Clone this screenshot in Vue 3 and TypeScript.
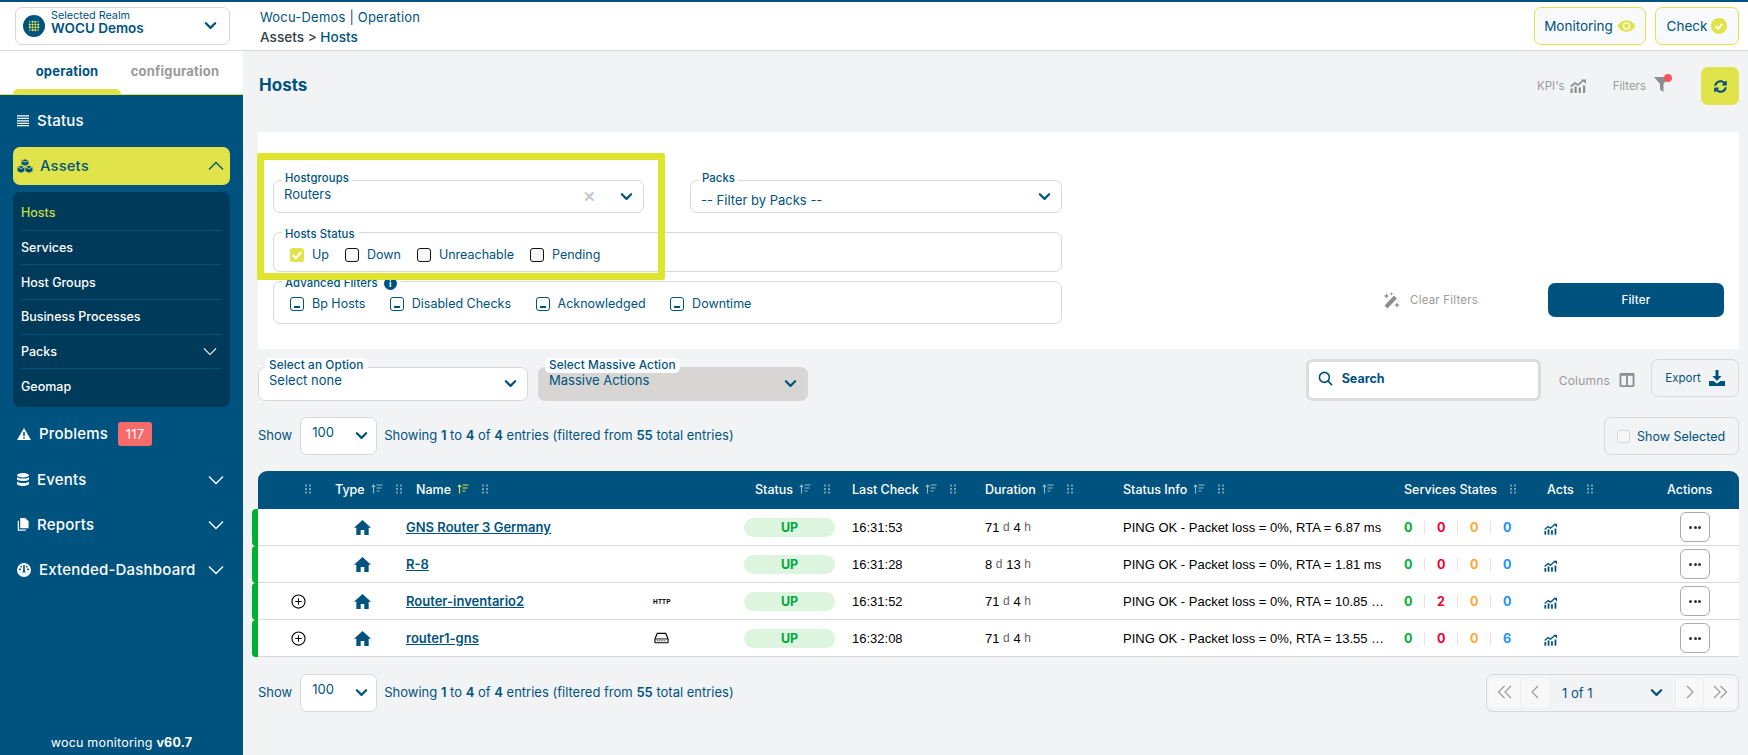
<template>
  <div class="page">
    <svg class="defs" width="0" height="0">
      <symbol id="i-chev" viewBox="0 0 14 10"><path d="M2 2l5 5 5-5" fill="none" stroke="currentColor" stroke-width="2.4" stroke-linecap="round" stroke-linejoin="round" /></symbol>
      <symbol id="i-thin" viewBox="0 0 16 10"><path d="M1 1.500l7 7 7-7" fill="none" stroke="currentColor" stroke-width="1.300" /></symbol>
      <symbol id="i-sort" viewBox="0 0 12 10"><path d="M2.500 9.500V1M.8 2.800L2.500 1l1.700 1.800M5.500 1h6M5.500 4h5M5.500 7h3" fill="none" stroke="currentColor" stroke-width="1.100" /></symbol>
      <symbol id="i-grip" viewBox="0 0 8 10"><g fill="currentColor"><rect x="1" y="0.500" width="2" height="2" /><rect x="5" y="0.500" width="2" height="2" /><rect x="1" y="4" width="2" height="2" /><rect x="5" y="4" width="2" height="2" /><rect x="1" y="7.500" width="2" height="2" /><rect x="5" y="7.500" width="2" height="2" /></g></symbol>
      <symbol id="i-home" viewBox="0 0 16 14"><path fill="currentColor" d="M8 0L0 7.200h2.200V14h4.100V9.300h3.400V14h4.100V7.200H16z" /></symbol>
      <symbol id="i-chart" viewBox="0 0 16 14"><path d="M.8 7.500l4.200-3.500 3 2 5.500-4.800" fill="none" stroke="currentColor" stroke-width="1.700" /><path d="M11.500.5H16V5z" fill="currentColor" /><g fill="currentColor"><rect x="0.500" y="9.500" width="2.200" height="4.500" /><rect x="4.500" y="7.500" width="2.200" height="6.500" /><rect x="8.700" y="8.500" width="2.200" height="5.500" /><rect x="13" y="6.500" width="2.200" height="7.500" /></g></symbol>
      <symbol id="i-dbl" viewBox="0 0 16 14"><path d="M7.500 1L1.500 7l6 6M14 1L8 7l6 6" fill="none" stroke="currentColor" stroke-width="1.200" /></symbol>
      <symbol id="i-one" viewBox="0 0 10 14"><path d="M8 1L2 7l6 6" fill="none" stroke="currentColor" stroke-width="1.200" /></symbol>
      <symbol id="i-sync" viewBox="0 0 512 512"><path fill="currentColor" d="M370.72 133.28C339.458 104.008 298.888 87.962 255.848 88c-77.458.068-144.328 53.178-162.791 126.85-1.344 5.363-6.122 9.15-11.651 9.15H24.103c-7.498 0-13.194-6.807-11.807-14.176C33.933 94.924 134.813 8 256 8c66.448 0 126.791 26.136 171.315 68.685L463.03 40.97C478.149 25.851 504 36.559 504 57.941V192c0 13.255-10.745 24-24 24H345.941c-21.382 0-32.09-25.851-16.971-40.971l41.75-41.749zM32 296h134.059c21.382 0 32.09 25.851 16.971 40.971l-41.75 41.75c31.262 29.273 71.835 45.319 114.876 45.28 77.418-.07 144.315-53.144 162.787-126.849 1.344-5.363 6.122-9.15 11.651-9.15h57.304c7.498 0 13.194 6.807 11.807 14.176C478.067 417.076 377.187 504 256 504c-66.448 0-126.791-26.136-171.315-68.685L48.97 471.03C33.851 486.149 8 475.441 8 454.059V320c0-13.255 10.745-24 24-24z" /></symbol>
    </svg>

    <header class="topbar">
      <div class="realm">
        <svg class="realm-logo" viewBox="0 0 22 22">
          <circle cx="11" cy="11" r="11" fill="#00537f" />
          <g fill="#e0e44a">
            <circle v-for="d in logoDots" :key="d.x + '-' + d.y" :cx="d.x" :cy="d.y" :r="d.r" />
          </g>
        </svg>
        <div class="realm-text">
          <span class="realm-small">Selected Realm</span>
          <span class="realm-name">WOCU Demos</span>
        </div>
        <svg class="chev realm-chev"><use href="#i-chev" /></svg>
      </div>
      <div class="crumbs">
        <div class="crumb-top">Wocu-Demos | Operation</div>
        <div class="crumb-path"><b>Assets &gt;</b> Hosts</div>
      </div>
      <div class="top-actions">
        <button class="top-btn monitoring">
          Monitoring
          <svg class="eye" viewBox="0 0 20 14">
            <path d="M10 1C5.500 1 2 4 .5 7c1.500 3 5 6 9.500 6s8-3 9.500-6C18 4 14.500 1 10 1z" fill="#e0e44a" />
            <circle cx="10" cy="7" r="4" fill="#f8f9fa" />
            <circle cx="10" cy="7" r="2.600" fill="#e0e44a" />
          </svg>
        </button>
        <button class="top-btn check">
          Check
          <svg class="eye-check" viewBox="0 0 16 16">
            <circle cx="8" cy="8" r="8" fill="#e0e44a" />
            <path d="M4.500 8.200l2.400 2.400 4.600-4.800" fill="none" stroke="#fff" stroke-width="1.800" />
          </svg>
        </button>
      </div>
    </header>

    <div class="body">
      <aside class="sidebar">
        <div class="tabs">
          <div class="tab active">operation</div>
          <div class="tab">configuration</div>
        </div>
        <nav class="nav">
          <div class="nav-item">
            <svg class="nav-icon" viewBox="0 0 13 12"><path d="M0 1h13M0 3.700h13M0 6.400h13M0 9.100h13M0 11.500h13" stroke="currentColor" stroke-width="1.500" /></svg>
            <span class="status-label">Status</span>
          </div>
          <div class="nav-current">
            <svg class="nav-icon cubes" viewBox="0 0 16 14">
              <g fill="currentColor" stroke="#e0e44a" stroke-width="0.500"><path d="M8 0l3.800 1.500v4L8 7 4.200 5.500v-4z" /><path d="M4 6.500l3.800 1.500v4.300L4 14 .2 12.300V8z" /><path d="M12 6.500L15.800 8v4.300L12 14l-3.800-1.700V8z" /></g>
              <path d="M4.500 1.700L8 3l3.500-1.300M.6 8.200L4 9.600l3.400-1.400M8.600 8.200L12 9.600l3.400-1.400" fill="none" stroke="#e0e44a" stroke-width="0.800" />
            </svg>
            <span>Assets</span>
            <svg class="thin up"><use href="#i-thin" /></svg>
          </div>
          <div class="submenu">
            <div v-for="s in subItems" :key="s.label" class="sub-item" :class="{ on: s.on }">
              {{ s.label }}
              <svg v-if="s.more" class="thin small"><use href="#i-thin" /></svg>
            </div>
          </div>
          <div class="nav-item problems">
            <svg class="nav-icon wide" viewBox="0 0 14 12"><path fill-rule="evenodd" fill="currentColor" d="M7 0l7 12H0zM6.200 4v4h1.600V4zm0 5v1.500h1.600V9z" /></svg>
            <span>Problems</span>
            <span class="badge">117</span>
          </div>
          <div class="nav-item">
            <svg class="nav-icon" viewBox="0 0 12 13"><g fill="currentColor"><ellipse cx="6" cy="2.200" rx="6" ry="2.200" /><path d="M0 4v2c0 1.200 2.700 2 6 2s6-.8 6-2V4c-1 1-3.500 1.500-6 1.500S1 5 0 4z" /><path d="M0 8.500v2.300C0 12 2.700 13 6 13s6-1 6-2.200V8.500c-1 1-3.500 1.500-6 1.500S1 9.500 0 8.500z" /></g></svg>
            <span>Events</span>
            <svg class="thin"><use href="#i-thin" /></svg>
          </div>
          <div class="nav-item">
            <svg class="nav-icon" viewBox="0 0 12 14"><path fill="currentColor" d="M3 0h5.500L12 3.500V11H3z" /><path d="M1 3v10h8" fill="none" stroke="currentColor" stroke-width="1.300" /></svg>
            <span>Reports</span>
            <svg class="thin"><use href="#i-thin" /></svg>
          </div>
          <div class="nav-item extended">
            <svg class="nav-icon wide" viewBox="0 0 14 14"><path fill-rule="evenodd" fill="currentColor" d="M7 0a7 7 0 1 1 0 14A7 7 0 0 1 7 0zM6.200 2v5.500l-1 2h3.600l-1-2V2zM2 5.500v1.800h1.800V5.500zM10.200 5.500v1.800H12V5.500zM3.500 2.800v1.800h1.400V2.800zM9.100 2.800v1.800h1.400V2.800z" /></svg>
            <span>Extended-Dashboard</span>
            <svg class="thin"><use href="#i-thin" /></svg>
          </div>
          <div class="version">wocu monitoring <b>v60.7</b></div>
        </nav>
      </aside>

      <main class="main">
        <div class="title-row">
          <h1 class="title">Hosts</h1>
          <div class="title-tools">
            <span class="tool">KPI's <svg class="tool-icon"><use href="#i-chart" /></svg></span>
            <span class="tool filters">
              Filters
              <svg class="funnel" viewBox="0 0 18 18"><path d="M0 3h15L9.500 10v8L6 15.500V10z" fill="#8e8e8e" /><circle cx="14" cy="4" r="4" fill="#f4555e" /></svg>
            </span>
            <button class="refresh"><svg class="sync"><use href="#i-sync" /></svg></button>
          </div>
        </div>

        <section class="panel">
          <div class="highlight"></div>
          <div class="filter-grid">
            <div class="field box-select">
              <label class="legend">Hostgroups</label>
              <span class="value up-value">Routers</span>
              <span class="clear">✕</span>
              <svg class="chev"><use href="#i-chev" /></svg>
            </div>
            <div class="field box-select">
              <label class="legend">Packs</label>
              <span class="value low-value">-- Filter by Packs --</span>
              <svg class="chev"><use href="#i-chev" /></svg>
            </div>
            <div class="field box-checks status-box">
              <label class="legend low-legend">Hosts Status</label>
              <div class="checks">
                <span v-for="c in statusChecks" :key="c.label" class="check-item">
                  <span class="cb" :class="{ on: c.on }">
                    <svg v-if="c.on" viewBox="0 0 10 10"><path d="M2 5l2.200 2.200L8 3" fill="none" stroke="#fff" stroke-width="1.500" /></svg>
                  </span>
                  {{ c.label }}
                </span>
              </div>
            </div>
            <div class="field box-checks advanced-box">
              <label class="legend low-legend">Advanced Filters <i class="info">i</i></label>
              <div class="checks wide-gap">
                <span v-for="c in advancedChecks" :key="c" class="check-item">
                  <span class="cb minus"></span>
                  {{ c }}
                </span>
              </div>
            </div>
          </div>
          <div class="filter-actions">
            <span class="clear-filters">
              <svg class="wand" viewBox="0 0 17 17">
                <path d="M3 15L12.500 5" stroke="#8e8e8e" stroke-width="4" />
                <path d="M3.500 1l.8 2.200 2.200.8-2.200.8-.8 2.200-.8-2.200L.5 4l2.200-.8zM14 10l.8 2.200 2.200.8-2.200.8-.8 2.200-.8-2.200-2.200-.8 2.200-.8zM8.500 0l.5 1.300 1.300.5-1.300.5-.5 1.300L8 2.300l-1.300-.5L8 1.300z" fill="#8e8e8e" />
              </svg>
              Clear Filters
            </span>
            <button class="filter-btn">Filter</button>
          </div>
        </section>

        <div class="toolbar">
          <div class="field tool-select">
            <label class="legend pill-legend">Select an Option</label>
            <span class="value raised">Select none</span>
            <svg class="chev"><use href="#i-chev" /></svg>
          </div>
          <div class="field tool-select disabled">
            <label class="legend pill-legend">Select Massive Action</label>
            <span class="value raised">Massive Actions</span>
            <svg class="chev"><use href="#i-chev" /></svg>
          </div>
          <div class="toolbar-right">
            <div class="search">
              <svg class="search-icon" viewBox="0 0 16 16"><circle cx="6.800" cy="6.800" r="5.300" fill="none" stroke="currentColor" stroke-width="1.700" /><path d="M10.800 10.800L15 15" stroke="currentColor" stroke-width="1.700" /></svg>
              Search
            </div>
            <span class="columns">
              Columns
              <svg class="col-icon" viewBox="0 0 16 15"><path fill-rule="evenodd" fill="#8e8e8e" d="M1.500 0h13A1.500 1.500 0 0 1 16 1.500v12a1.500 1.500 0 0 1-1.500 1.500h-13A1.500 1.500 0 0 1 0 13.500v-12A1.500 1.500 0 0 1 1.500 0zM2 3v10h5V3zm7 0v10h5V3z" /></svg>
            </span>
            <button class="export">
              Export
              <svg class="export-icon" viewBox="0 0 16 16"><path d="M6.500 0h3v6h3L8 11 3.500 6h3z" fill="currentColor" /><path d="M0 11h4.500L8 13.500 11.500 11H16v5H0z" fill="currentColor" /></svg>
            </button>
          </div>
        </div>

        <div class="show-row">
          <span class="show-label">Show</span>
          <div class="per-page"><span>100</span><svg class="chev"><use href="#i-chev" /></svg></div>
          <span class="entries">Showing <b>1</b> to <b>4</b> of <b>4</b> entries (filtered from <b>55</b> total entries)</span>
          <div class="show-selected"><span class="cb-light"></span>Show Selected</div>
        </div>

        <div class="table">
          <div class="row head">
            <div class="th drag-only"><svg class="grip"><use href="#i-grip" /></svg></div>
            <div v-for="h in headers" :key="h.label" class="th" :class="h.cls">
              {{ h.label }}
              <svg v-if="h.sort" class="sort" :class="{ active: h.active }"><use href="#i-sort" /></svg>
              <svg v-if="h.grip" class="grip"><use href="#i-grip" /></svg>
            </div>
          </div>
          <div v-for="r in rows" :key="r.name" class="row host">
            <div class="td expand">
              <svg v-if="r.expand" class="plus" viewBox="0 0 16 16"><circle cx="8" cy="8" r="7" fill="#fff" stroke="#000" stroke-width="1.200" /><path d="M8 4.500v7M4.500 8h7" stroke="#000" stroke-width="1" /></svg>
            </div>
            <div class="td type"><svg class="home"><use href="#i-home" /></svg></div>
            <div class="td name"><a>{{ r.name }}</a></div>
            <div class="td pack">
              <span v-if="r.pack === 'http'" class="http">HTTP</span>
              <svg v-else-if="r.pack === 'disk'" class="disk" viewBox="0 0 16 12"><path d="M3.500 1h9L15 7v3.500a.6.600 0 0 1-.6.500H1.600a.6.600 0 0 1-.6-.5V7z" fill="none" stroke="#000" stroke-width="1.200" /><path d="M1.500 7h13" stroke="#000" stroke-width="1" /><path d="M3 9h10" stroke="#000" stroke-dasharray="1 1" /></svg>
            </div>
            <div class="td"><span class="pill">UP</span></div>
            <div class="td plain">{{ r.time }}</div>
            <div class="td plain">{{ r.days }} <small>d</small> {{ r.hours }} <small>h</small></div>
            <div class="td plain info-cell"><span>{{ r.info }}</span></div>
            <div class="td states">
              <b class="s-ok">0</b><i></i><b class="s-crit">{{ r.crit }}</b><i></i><b class="s-warn">0</b><i></i><b class="s-unk">{{ r.unk }}</b>
            </div>
            <div class="td acts"><svg class="act-chart"><use href="#i-chart" /></svg></div>
            <div class="td more"><button class="more-btn"><span></span><span></span><span></span></button></div>
          </div>
        </div>

        <div class="bottom-row">
          <span class="show-label">Show</span>
          <div class="per-page"><span>100</span><svg class="chev"><use href="#i-chev" /></svg></div>
          <span class="entries">Showing <b>1</b> to <b>4</b> of <b>4</b> entries (filtered from <b>55</b> total entries)</span>
          <div class="pager">
            <span class="pg first"><svg class="pg-dbl"><use href="#i-dbl" /></svg></span>
            <span class="pg prev"><svg class="pg-one"><use href="#i-one" /></svg></span>
            <span class="pg-label">1 of 1<svg class="chev"><use href="#i-chev" /></svg></span>
            <span class="pg next"><svg class="pg-one flip"><use href="#i-one" /></svg></span>
            <span class="pg last"><svg class="pg-dbl flip"><use href="#i-dbl" /></svg></span>
          </div>
        </div>
      </main>
    </div>
  </div>
</template>

<script setup lang="ts">
interface HostRow {
  name: string
  expand: boolean
  pack: string
  time: string
  days: number
  hours: number
  info: string
  crit: number
  unk: number
}

const logoDots: { x: number; y: number; r: number }[] = []
for (let i = 0; i < 4; i++) {
  for (let j = 0; j < 4; j++) {
    const corner = (i === 0 || i === 3) && (j === 0 || j === 3)
    logoDots.push({ x: 6.800 + i * 2.800, y: 6.800 + j * 2.800, r: corner ? 0.700 : 1.150 })
  }
}

const subItems = [
  { label: 'Hosts', on: true },
  { label: 'Services' },
  { label: 'Host Groups' },
  { label: 'Business Processes' },
  { label: 'Packs', more: true },
  { label: 'Geomap' },
]

const statusChecks = [
  { label: 'Up', on: true },
  { label: 'Down' },
  { label: 'Unreachable' },
  { label: 'Pending' },
]

const advancedChecks = ['Bp Hosts', 'Disabled Checks', 'Acknowledged', 'Downtime']

const headers = [
  { label: 'Type', sort: true, grip: true, cls: 'th-type' },
  { label: 'Name', sort: true, grip: true, active: true, cls: 'th-name' },
  { label: '', cls: '' },
  { label: 'Status', sort: true, grip: true, cls: 'th-status' },
  { label: 'Last Check', sort: true, grip: true, cls: '' },
  { label: 'Duration', sort: true, grip: true, cls: '' },
  { label: 'Status Info', sort: true, grip: true, cls: '' },
  { label: 'Services States', grip: true, cls: '' },
  { label: 'Acts', grip: true, cls: 'th-acts' },
  { label: 'Actions', cls: 'th-actions' },
]

const rows: HostRow[] = [
  { name: 'GNS Router 3 Germany', expand: false, pack: '', time: '16:31:53', days: 71, hours: 4, info: 'PING OK - Packet loss = 0%, RTA = 6.87 ms', crit: 0, unk: 0 },
  { name: 'R-8', expand: false, pack: '', time: '16:31:28', days: 8, hours: 13, info: 'PING OK - Packet loss = 0%, RTA = 1.81 ms', crit: 0, unk: 0 },
  { name: 'Router-inventario2', expand: true, pack: 'http', time: '16:31:52', days: 71, hours: 4, info: 'PING OK - Packet loss = 0%, RTA = 10.85 ms', crit: 2, unk: 0 },
  { name: 'router1-gns', expand: true, pack: 'disk', time: '16:32:08', days: 71, hours: 4, info: 'PING OK - Packet loss = 0%, RTA = 13.55 ms', crit: 0, unk: 6 },
]
</script>

<style>
html,
body {
  margin: 0;
  background: #f2f3f5;
}
</style>

<style scoped>
.page {
  --blue: #00537f;
  --yellow: #e0e44a;
  width: 1748px;
  height: 755px;
  overflow: hidden;
  display: flex;
  flex-direction: column;
  font-family: Inter, "Noto Sans", sans-serif;
  font-size: 13px;
  color: var(--blue);
  background: #f2f3f5;
}

.defs {
  position: absolute;
}

button {
  font-family: inherit;
  cursor: pointer;
}

.chev {
  width: 13px;
  height: 10px;
  color: var(--blue);
  flex: none;
}

.thin {
  width: 16px;
  height: 10px;
  margin-left: auto;
  margin-right: 6px;
  flex: none;
}

.thin.up {
  transform: rotate(180deg);
}

/* top bar */
.topbar {
  height: 48px;
  flex: none;
  display: flex;
  align-items: center;
  background: #fff;
  border-top: 2px solid var(--blue);
  border-bottom: 1px solid #d8d8d8;
  box-sizing: content-box;
}

.realm {
  width: 215px;
  height: 38px;
  margin-left: 15px;
  box-sizing: border-box;
  border: 1px solid #d8d8d8;
  border-radius: 7px;
  display: flex;
  align-items: center;
  padding: 0 12px 0 7px;
}

.realm-logo {
  width: 22px;
  height: 22px;
  margin-right: 6px;
  flex: none;
}

.realm-text {
  display: flex;
  flex-direction: column;
  line-height: 12px;
  flex: 1;
  padding-bottom: 7px;
}

.realm-small {
  font-size: 10.800px;
}

.realm-name {
  font-size: 13.500px;
  font-weight: 600;
  line-height: 13px;
}

.crumbs {
  margin-left: 30px;
  line-height: 20px;
  padding-top: 2px;
}

.crumb-top {
  font-size: 13px;
  letter-spacing: 0.2px;
}

.crumb-path {
  font-size: 13.600px;
  font-weight: 500;
}

.crumb-path b {
  font-weight: 500;
  color: #33404a;
}

.top-actions {
  margin-left: auto;
  display: flex;
  gap: 9px;
  margin-right: 9px;
}

.top-btn {
  height: 38px;
  box-sizing: border-box;
  background: #f8f9fa;
  border: 1px solid var(--yellow);
  border-radius: 7px;
  color: var(--blue);
  font-size: 13.500px;
  display: flex;
  align-items: center;
  justify-content: center;
  gap: 4px;
  padding: 0;
}

.monitoring {
  width: 112px;
}

.check {
  width: 84px;
}

.eye {
  width: 19px;
  height: 14px;
}

.eye-check {
  width: 16px;
  height: 16px;
}

/* sidebar */
.body {
  flex: 1;
  display: flex;
  min-height: 0;
}

.sidebar {
  width: 243px;
  flex: none;
  display: flex;
  flex-direction: column;
  background: #fff;
}

.tabs {
  height: 43px;
  flex: none;
  display: flex;
  padding-left: 13px;
}

.tab {
  position: relative;
  width: 108px;
  text-align: center;
  font-weight: 700;
  font-size: 13px;
  letter-spacing: 0.2px;
  line-height: 40px;
  color: #9a9a9a;
  height: 43px;
  box-sizing: border-box;
}

.tab.active {
  color: var(--blue);
}

.tab.active::after {
  content: "";
  position: absolute;
  left: 0;
  right: 0;
  bottom: 0;
  height: 5px;
  background: var(--yellow);
  border-radius: 5px 5px 0 0;
}

.nav {
  flex: 1;
  display: flex;
  flex-direction: column;
  background: var(--blue);
  border-top: 1px solid var(--yellow);
  padding: 3px 13px 0;
  color: #fff;
  font-size: 15px;
  font-weight: 500;
  letter-spacing: 0.2px;
}

.nav-item {
  height: 45px;
  flex: none;
  display: flex;
  align-items: center;
  padding-left: 4px;
  gap: 8px;
}

.nav-icon {
  width: 12px;
  height: 13px;
  flex: none;
}

.nav-icon.wide {
  width: 14px;
  height: 14px;
}

.nav-current {
  height: 38px;
  margin-top: 4px;
  flex: none;
  display: flex;
  align-items: center;
  gap: 7px;
  background: var(--yellow);
  border-radius: 7px;
  color: var(--blue);
  padding-left: 4px;
  font-size: 14.700px;
}

.nav-icon.cubes {
  width: 16px;
  height: 14px;
}

.submenu {
  margin-top: 7px;
  height: 215px;
  box-sizing: border-box;
  padding: 4px 8px 0;
  background: #003a5a;
  border-radius: 7px;
  font-size: 12.500px;
  letter-spacing: 0;
  margin-bottom: 4px;
}

.sub-item {
  height: 34.700px;
  box-sizing: border-box;
  display: flex;
  align-items: center;
  border-bottom: 1px solid #00537f;
}

.sub-item:last-child {
  border-bottom: 0;
}

.sub-item.on {
  color: #c3dc4a;
}

.thin.small {
  width: 14px;
  height: 9px;
  margin-right: 5px;
}

.problems {
  margin-bottom: 1px;
}

.badge {
  background: #f76a6a;
  border-radius: 3px;
  font-size: 13px;
  font-weight: 400;
  line-height: 24px;
  width: 34px;
  text-align: center;
  margin-left: 2px;
}

.version {
  margin-top: auto;
  margin-bottom: 3px;
  font-size: 12.500px;
  font-weight: 400;
  letter-spacing: 0.2px;
  text-align: center;
  line-height: 18px;
}

.version b {
  font-weight: 700;
}

/* main */
.main {
  flex: 1;
  min-width: 0;
  padding: 0 9px 0 15px;
}

.title-row {
  height: 81px;
  box-sizing: border-box;
  padding-top: 16px;
  display: flex;
  align-items: flex-start;
}

.title {
  margin: 7px 0 0 1px;
  font-size: 17px;
  line-height: 22px;
  font-weight: 700;
}

.title-tools {
  margin-left: auto;
  display: flex;
  align-items: center;
  color: #9a9a9a;
  font-size: 11.500px;
}

.tool {
  display: flex;
  align-items: center;
  gap: 5px;
}

.tool-icon {
  width: 16px;
  height: 14px;
  color: #8e8e8e;
}

.filters {
  margin-left: 27px;
  gap: 8px;
}

.funnel {
  width: 18px;
  height: 18px;
  margin-top: -7px;
}

.refresh {
  width: 38px;
  height: 38px;
  margin-left: 29px;
  background: var(--yellow);
  border: 0;
  border-radius: 7px;
  padding: 0;
  display: flex;
  align-items: center;
  justify-content: center;
}

.sync {
  width: 13px;
  height: 13px;
  color: var(--blue);
}

.panel {
  position: relative;
  height: 217px;
  box-sizing: border-box;
  background: #fff;
  padding: 48px 15px 0;
  display: flex;
}

.highlight {
  position: absolute;
  left: -1px;
  top: 21px;
  width: 408px;
  height: 127px;
  box-sizing: border-box;
  border: 7px solid #dfe52f;
  border-radius: 2px;
  z-index: 2;
  pointer-events: none;
}

.filter-grid {
  width: 789px;
  display: grid;
  grid-template-columns: 371px 372px;
  column-gap: 46px;
  grid-template-rows: 33px 40px 43px;
  row-gap: 19px;
  flex: none;
}

.field {
  position: relative;
  box-sizing: border-box;
  border: 1px solid #d8d8d8;
  border-radius: 7px;
  display: flex;
  align-items: center;
}

.legend {
  position: absolute;
  left: 8px;
  top: -9px;
  padding: 0 3px;
  background: #fff;
  font-size: 11.300px;
  font-weight: 500;
  line-height: 13px;
  letter-spacing: 0.1px;
}

.legend.low-legend {
  top: -5px;
  padding-right: 4px;
}

.box-select {
  padding: 0 10px;
}

.value {
  flex: 1;
  font-size: 13px;
}

.up-value {
  margin-top: -6px;
}

.low-value {
  margin-top: 7px;
}

.clear {
  color: #c8c8c8;
  font-size: 15px;
  margin-right: 24px;
  font-weight: 700;
}

.box-checks {
  grid-column: span 2;
  padding-left: 16px;
}

.advanced-box {
  margin-top: -10px;
  height: 43px;
}

.status-box {
  padding-top: 3px;
}

.checks {
  display: flex;
  gap: 16px;
  margin-top: 2px;
  font-size: 12.500px;
}

.checks.wide-gap {
  gap: 24.500px;
}

.check-item {
  display: flex;
  align-items: center;
  gap: 8px;
}

.cb {
  width: 14px;
  height: 14px;
  box-sizing: border-box;
  border: 1px solid #111;
  border-radius: 3px;
  background: #f8f8f8;
  display: block;
  position: relative;
}

.cb.on {
  border: 0;
  background: var(--yellow);
}

.cb.on svg {
  display: block;
}

.cb.minus {
  border-color: var(--blue);
  background: #fff;
}

.cb.minus::after {
  content: "";
  position: absolute;
  left: 3px;
  right: 3px;
  bottom: 2px;
  height: 1.500px;
  background: var(--blue);
}

.info {
  display: inline-block;
  width: 13px;
  height: 13px;
  margin-left: 3px;
  border-radius: 50%;
  background: var(--blue);
  color: #fff;
  font-style: normal;
  font-size: 9px;
  font-weight: 700;
  text-align: center;
  line-height: 13px;
}

.filter-actions {
  margin-left: auto;
  margin-top: 103px;
  height: 34px;
  display: flex;
  align-items: center;
}

.clear-filters {
  display: flex;
  align-items: center;
  gap: 10px;
  color: #9a9a9a;
  font-size: 11.500px;
  letter-spacing: 0.2px;
}

.wand {
  width: 17px;
  height: 17px;
}

.filter-btn {
  width: 176px;
  height: 34px;
  margin-left: 70px;
  background: var(--blue);
  color: #fff;
  border: 0;
  border-radius: 7px;
  font-size: 11.500px;
  font-weight: 500;
  letter-spacing: 0.2px;
}

/* toolbar */
.toolbar {
  margin-top: 10px;
  display: flex;
  align-items: flex-start;
  height: 42px;
}

.tool-select {
  width: 270px;
  height: 34px;
  margin-top: 8px;
  background: #fff;
  padding: 0 10px;
  margin-right: 10px;
}

.tool-select.disabled {
  background: #d8d6d4;
}

.legend.pill-legend {
  border-radius: 5px;
  padding: 1px 4px;
  top: -10px;
  left: 6px;
  font-size: 11.800px;
}

.raised {
  margin-top: -8px;
}

.toolbar-right {
  margin-left: auto;
  display: flex;
  align-items: flex-start;
}

.search {
  width: 235px;
  height: 42px;
  box-sizing: border-box;
  border: 3px solid #dcdcdc;
  border-radius: 7px;
  background: #fff;
  display: flex;
  align-items: center;
  padding: 0 0 3px 9px;
  gap: 9px;
  font-weight: 700;
  font-size: 12.500px;
}

.search-icon {
  width: 15px;
  height: 15px;
}

.columns {
  display: flex;
  align-items: center;
  gap: 9px;
  margin-left: 18px;
  height: 42px;
  color: #9a9a9a;
  font-size: 12px;
  letter-spacing: 0.2px;
}

.col-icon {
  width: 16px;
  height: 14px;
}

.export {
  width: 88px;
  height: 38px;
  margin-left: 16px;
  box-sizing: border-box;
  border: 1px solid #d8d8d8;
  border-radius: 7px;
  background: #f2f3f5;
  color: var(--blue);
  font-size: 11.500px;
  display: flex;
  align-items: center;
  justify-content: center;
  gap: 8px;
  padding: 0;
}

.export-icon {
  width: 16px;
  height: 16px;
}

.show-row,
.bottom-row {
  display: flex;
  align-items: center;
  height: 38px;
  font-size: 13px;
}

.show-row {
  margin-top: 16px;
}

.bottom-row {
  margin-top: 17px;
}

.show-label,
.entries {
  margin-bottom: 2px;
}

.per-page {
  width: 77px;
  height: 38px;
  box-sizing: border-box;
  margin-left: 8px;
  background: #fff;
  border: 1px solid #d8d8d8;
  border-radius: 7px;
  display: flex;
  align-items: center;
  justify-content: space-between;
  padding: 0 8px 0 11px;
}

.per-page > span {
  margin-top: -8px;
  font-size: 13px;
}

.entries {
  margin-left: 7px;
}

.entries b {
  font-weight: 600;
}

.show-selected {
  margin-left: auto;
  width: 135px;
  height: 38px;
  box-sizing: border-box;
  border: 1px solid #d8d8d8;
  border-radius: 7px;
  display: flex;
  align-items: center;
  padding-left: 12px;
  gap: 7px;
  font-size: 12.500px;
}

.cb-light {
  width: 11px;
  height: 11px;
  border: 1px solid #d8d8d8;
  border-radius: 2px;
  background: #f6f6f6;
}

/* table */
.table {
  margin-top: 16px;
}

.row {
  display: grid;
  grid-template-columns: 77px 70px 235px 104px 108px 133px 138px 281px 140px 96px 99px;
  align-items: center;
}

.head {
  height: 38px;
  box-sizing: border-box;
  padding-bottom: 2px;
  background: var(--blue);
  border-radius: 9px 9px 0 0;
  color: #fff;
  font-weight: 500;
  font-size: 12.500px;
}

.th {
  display: flex;
  align-items: center;
  white-space: nowrap;
}

.drag-only {
  padding-left: 34px;
}

.th-name {
  padding-left: 11px;
}

.th-status {
  padding-left: 11px;
}

.th-acts {
  padding-left: 3px;
}

.th-actions {
  padding-left: 27px;
}

.sort {
  width: 12px;
  height: 10px;
  margin-left: 6px;
  color: rgba(255, 255, 255, 0.6);
}

.sort.active {
  color: var(--yellow);
}

.grip {
  width: 8px;
  height: 10px;
  margin-left: 12px;
  color: rgba(255, 255, 255, 0.45);
}

.host {
  position: relative;
  height: 37px;
  box-sizing: border-box;
  background: #fff;
  border-bottom: 1px solid #d8d8d8;
}

.host::before {
  content: "";
  position: absolute;
  left: -6px;
  top: 0;
  bottom: -1px;
  width: 6px;
  background: #00b034;
  border-radius: 4px 0 0 4px;
}

.td {
  min-width: 0;
  display: flex;
  align-items: center;
}

.expand {
  padding-left: 33px;
}

.plus {
  width: 15px;
  height: 15px;
}

.type {
  padding-left: 19px;
}

.home {
  width: 17px;
  height: 15px;
  color: var(--blue);
}

.name {
  padding-left: 1px;
}

.name a {
  color: var(--blue);
  font-weight: 600;
  font-size: 13px;
  text-decoration: underline;
}

.pack {
  padding-left: 13px;
}

.http {
  font-family: "Liberation Sans", sans-serif;
  font-size: 6.500px;
  font-weight: 700;
  color: #000;
  letter-spacing: 0.2px;
}

.disk {
  width: 15px;
  height: 12px;
  margin-left: 1px;
}

.pill {
  display: block;
  width: 91px;
  height: 19px;
  border-radius: 10px;
  background: #ddf5df;
  color: #00a83c;
  font-weight: 700;
  font-size: 12.500px;
  line-height: 19px;
  text-align: center;
}

.plain {
  font-family: "Liberation Sans", Arial, sans-serif;
  font-size: 13px;
  color: #000;
  white-space: pre-wrap;
}

.plain small {
  font-size: 12px;
  color: #666;
}

.info-cell span {
  display: block;
  width: 264px;
  white-space: nowrap;
  overflow: hidden;
  text-overflow: ellipsis;
}

.states {
  gap: 12px;
  font-size: 12.500px;
}

.states b {
  width: 8px;
  text-align: center;
  font-weight: 700;
}

.states i {
  width: 1px;
  height: 13px;
  background: #e4e4e4;
}

.s-ok {
  color: #00b034;
}

.s-crit {
  color: #f5002f;
}

.s-warn {
  color: #ffa733;
}

.s-unk {
  color: #1e90ff;
}

.act-chart {
  width: 13px;
  height: 12px;
  color: var(--blue);
}

.acts {
  padding-top: 3px;
}

.more {
  padding-left: 40px;
}

.more-btn {
  width: 30px;
  height: 30px;
  box-sizing: border-box;
  background: #fff;
  border: 1px solid #aaa;
  border-radius: 6px;
  display: flex;
  align-items: center;
  justify-content: center;
  gap: 1.500px;
  padding: 0;
}

.more-btn span {
  width: 3px;
  height: 3px;
  border-radius: 50%;
  background: #333;
}

.pager {
  margin-left: auto;
  width: 253px;
  height: 38px;
  box-sizing: border-box;
  border: 1px solid #d8d8d8;
  border-radius: 7px;
  padding: 4px 2px;
  display: flex;
  align-items: stretch;
}

.pg {
  width: 32px;
  background: #f8f8f9;
  border-right: 1px solid #eee;
  color: #9a9a9a;
  box-sizing: border-box;
  display: flex;
  align-items: center;
  justify-content: center;
}

.pg svg {
  margin-top: -3px;
}

.pg-dbl {
  width: 16px;
  height: 14px;
}

.pg-one {
  width: 10px;
  height: 14px;
}

.flip {
  transform: scaleX(-1);
}

.prev,
.next {
  width: 29px;
}

.pg.next {
  border-left: 1px solid #eee;
}

.pg.last {
  border-right: 0;
}

.pg-label {
  flex: 1;
  display: flex;
  align-items: center;
  justify-content: space-between;
  padding: 0 12px;
  font-size: 13px;
}
</style>
